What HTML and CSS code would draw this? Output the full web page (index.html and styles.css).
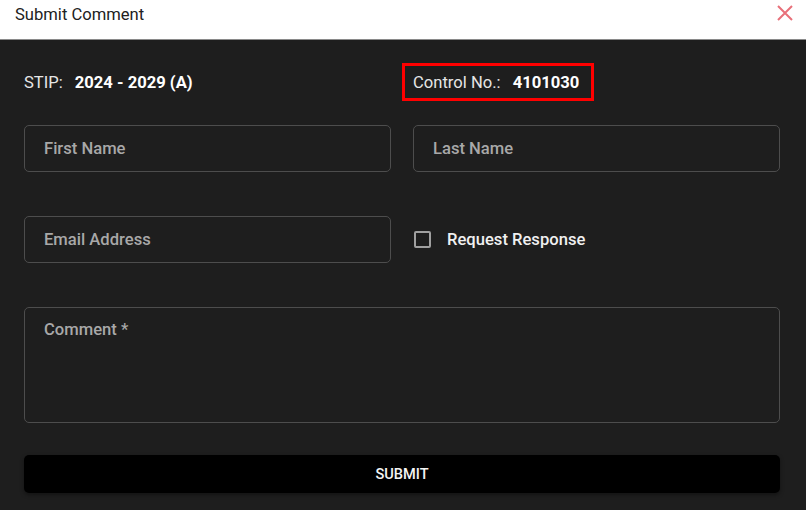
FILE: index.html
```html
<!DOCTYPE html>
<html lang="en">
<head>
  <meta charset="UTF-8" />
  <meta name="viewport" content="width=device-width, initial-scale=1.0"/>
  <title>Submit Comment</title>
  <link rel="stylesheet" href="styles.css">
</head>
<body>
  <div class="dialog">
    <div class="dialog-header">
      <h2>Submit Comment</h2>
      <button class="close-btn" aria-label="Close">
        <svg width="16" height="16" viewBox="0 0 16 16">
          <path d="M1 1 L15 15 M15 1 L1 15" stroke="#e8707a" stroke-width="2" fill="none"/>
        </svg>
      </button>
    </div>

    <form class="dialog-body">
      <div class="info-row">
        <div class="info">
          <span class="info-label">STIP:</span>
          <span class="info-value">2024 - 2029 (A)</span>
        </div>
        <div class="info highlight">
          <span class="info-label">Control No.:</span>
          <span class="info-value">4101030</span>
        </div>
      </div>

      <div class="form-grid">
        <input type="text" class="field" placeholder="First Name">
        <input type="text" class="field" placeholder="Last Name">
        <input type="email" class="field" placeholder="Email Address">
        <label class="check">
          <input type="checkbox">
          <span class="check-box"></span>
          Request Response
        </label>
        <textarea class="field comment" placeholder="Comment *"></textarea>
      </div>

      <button type="submit" class="submit-btn">SUBMIT</button>
    </form>
  </div>
</body>
</html>
```

FILE: styles.css
```css
* {
  margin: 0;
  padding: 0;
  box-sizing: border-box;
}

body {
  font-family: Roboto, 'Liberation Sans', sans-serif;
  background: #1e1e1e;
  height: 100vh;
  overflow: hidden;
}

.dialog {
  display: flex;
  flex-direction: column;
  height: 100%;
}

.dialog-header {
  display: flex;
  justify-content: space-between;
  align-items: flex-start;
  height: 40px;
  background: #fff;
  border-bottom: 1px solid #8a8a8a;
  padding: 5px 13px 0 15px;
}

.dialog-header h2 {
  font-size: 16.6px;
  font-weight: 400;
  line-height: 20px;
  color: #212121;
}

.close-btn {
  border: none;
  background: transparent;
  cursor: pointer;
  line-height: 0;
}

.dialog-body {
  flex: 1;
  padding: 23px 26px 0 24px;
}

.info-row {
  display: grid;
  grid-template-columns: 1fr 1fr;
  column-gap: 22px;
  height: 38px;
}

.info {
  display: flex;
  align-items: center;
  gap: 12px;
  font-size: 16.6px;
  color: #e6e6e6;
}

.info-value {
  font-weight: 700;
  color: #fff;
}

.info.highlight {
  justify-self: start;
  border: 3px solid #ff0000;
  margin-left: -11px;
  padding: 0 12px 0 8px;
}

.form-grid {
  display: grid;
  grid-template-columns: 1fr 1fr;
  column-gap: 22px;
  row-gap: 44px;
  margin-top: 24px;
}

.field {
  height: 47px;
  width: 100%;
  background: #1e1e1e;
  border: 1px solid #4d4d4d;
  border-radius: 5px;
  padding: 0 19px;
  font-family: inherit;
  font-size: 16.6px;
  font-weight: 500;
  color: #eee;
}

.field::placeholder {
  color: #a8a8a8;
}

.field:focus {
  outline: none;
  border-color: #888;
}

.comment {
  grid-column: 1 / -1;
  height: 116px;
  padding: 12px 19px;
  resize: none;
}

.check {
  display: flex;
  align-items: center;
  gap: 16px;
  font-size: 16.6px;
  font-weight: 500;
  color: #f0f0f0;
  cursor: pointer;
}

.check input {
  display: none;
}

.check-box {
  width: 17px;
  height: 17px;
  margin-left: 1px;
  border: 2px solid #a0a0a0;
  border-radius: 2px;
}

.submit-btn {
  width: 100%;
  height: 38px;
  margin-top: 32px;
  background: #000;
  color: #f4f4f4;
  border: none;
  border-radius: 5px;
  font-family: inherit;
  font-size: 14.6px;
  font-weight: 500;
  box-shadow: 0 2px 4px rgba(0, 0, 0, 0.4);
  cursor: pointer;
}
```
